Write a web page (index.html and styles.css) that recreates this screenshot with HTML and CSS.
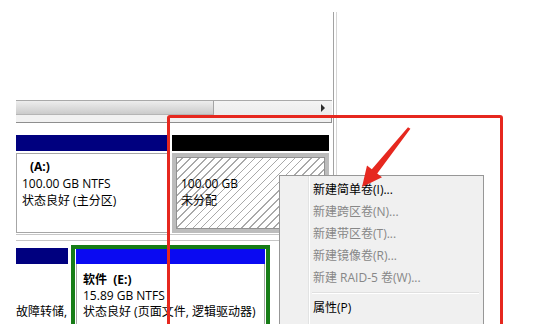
FILE: index.html
```html
<!DOCTYPE html>
<html lang="zh-CN">
<head>
    <meta charset="UTF-8">
    <title>磁盘管理</title>
    <link rel="stylesheet" href="styles.css">
</head>
<body>
    <div class="screen">
        <div class="console">
            <div class="volume-list"></div>
            <div class="hscroll">
                <div class="thumb"></div>
                <div class="track"><span class="arrow-right"></span></div>
            </div>
            <div class="splitter"></div>

            <div class="graph">
                <div class="disk">
                    <div class="part part-a">
                        <div class="bar primary"></div>
                        <div class="body">
                            <p class="label">(A:)</p>
                            <p>100.00 GB NTFS</p>
                            <p>状态良好 (主分区)</p>
                        </div>
                    </div>
                    <div class="part part-free">
                        <div class="bar unallocated"></div>
                        <div class="body hatched">
                            <p>&nbsp;</p>
                            <p>100.00 GB</p>
                            <p>未分配</p>
                        </div>
                    </div>
                </div>

                <div class="disk-sep"></div>

                <div class="disk">
                    <div class="part part-c">
                        <div class="bar primary"></div>
                        <div class="body plain">
                            <p>&nbsp;</p>
                            <p>&nbsp;</p>
                            <p>故障转储,</p>
                        </div>
                    </div>
                    <div class="extended">
                        <div class="part part-e">
                            <div class="bar logical"></div>
                            <div class="body">
                                <p class="label-e">软件&nbsp; (E:)</p>
                                <p>15.89 GB NTFS</p>
                                <p>状态良好 (页面文件, 逻辑驱动器)</p>
                            </div>
                        </div>
                    </div>
                    <div class="part part-next"></div>
                </div>
            </div>
        </div>
        <div class="edge"></div>
    </div>

    <div class="menu">
        <div class="item">新建简单卷(I)...</div>
        <div class="item disabled">新建跨区卷(N)...</div>
        <div class="item disabled">新建带区卷(T)...</div>
        <div class="item disabled">新建镜像卷(R)...</div>
        <div class="item disabled">新建 RAID-5 卷(W)...</div>
        <div class="sep"></div>
        <div class="item">属性(P)</div>
    </div>

    <div class="mark"></div>

    <svg class="pointer" width="535" height="324" viewBox="0 0 535 324">
        <polygon points="408,127.2 371.8,169.2 367,165.5 362,187 382,177.2 377.2,173.6 410.4,128.8" fill="#e6281f"></polygon>
    </svg>
</body>
</html>
```

FILE: styles.css
```css
body {
    margin: 0;
    width: 535px;
    height: 324px;
    overflow: hidden;
    position: relative;
    background-color: #fff;
    color: #000;
    font-family: "Open Sans", "Noto Sans CJK SC", sans-serif;
    font-size: 12px;
}
p {
    margin: 0;
    white-space: nowrap;
}
.screen {
    display: flex;
    height: 324px;
}
.console {
    width: 316px;
    margin-left: 16px;
    display: flex;
    flex-direction: column;
}
.edge {
    width: 2px;
    margin-left: 1px;
    margin-top: 12px;
    border-left: 1px solid #a3a3a3;
    border-right: 1px solid #d6d6d6;
}
.volume-list {
    height: 100px;
}
.hscroll {
    height: 14px;
    border-top: 1px solid #a9a9a9;
    display: flex;
    background: linear-gradient(#f4f4f4, #ececec);
}
.thumb {
    width: 197px;
    background: linear-gradient(#ededed, #dedede 45%, #cbcbcb);
    border-right: 1px solid #a4a4a4;
    border-bottom: 1px solid #b5b5b5;
}
.track {
    flex: 1;
    display: flex;
    justify-content: flex-end;
    align-items: center;
    padding-right: 7px;
}
.arrow-right {
    width: 0;
    height: 0;
    border-left: 4px solid #2b2b2b;
    border-top: 4px solid transparent;
    border-bottom: 4px solid transparent;
}
.splitter {
    height: 7px;
    background-color: #f1f1f1;
    border-bottom: 1px solid #8e8e8e;
    border-right: 1px solid #8e8e8e;
}
.graph {
    flex: 1;
    min-height: 0;
    padding-top: 12px;
    overflow: hidden;
    line-height: 17px;
}
.disk {
    display: flex;
    gap: 4px;
}
.part {
    display: flex;
    flex-direction: column;
}
.bar {
    height: 16px;
}
.primary { background-color: #00007f; }
.unallocated { background-color: #000; }
.logical { background-color: #0a0af2; height: 15px; }
.body {
    box-sizing: border-box;
    height: 80px;
    margin-top: 2px;
    border: 1px solid #a6a6a6;
    padding: 4px 0 0 5px;
    background-color: #fff;
}
.part-a { width: 152px; }
.part-free { width: 157px; }
.label {
    margin-left: 8px;
    font-weight: bold;
}
.hatched {
    border: 4px solid #bcbcbc;
    box-shadow: inset 0 0 0 1px #929292;
    padding-top: 1px;
    background: repeating-linear-gradient(135deg, #fff 0 4.6px, #a9a9a9 4.6px 5.7px);
}
.disk-sep {
    height: 5px;
    margin-top: 1px;
    border-top: 1px solid #c6c6c6;
    border-bottom: 1px solid #c6c6c6;
    margin-bottom: 4px;
}
.disk-sep + .disk {
    gap: 0;
    line-height: 16px;
}
.part-c {
    width: 52px;
    padding-top: 3px;
}
.plain {
    border: none;
    height: 60px;
    margin-top: 0;
    padding: 8px 0 0 0;
}
.extended {
    width: 189px;
    margin-left: 3px;
    border: 4px solid #177c17;
    border-bottom: none;
    padding: 0 1px 0 1px;
}
.part-e .body {
    height: 70px;
    margin-top: 0;
    padding: 8px 0 0 6px;
    border-top: none;
}
.label-e {
    font-weight: bold;
}
.part-next {
    flex: 1;
    margin-left: 9px;
    border-left: 1px solid #a6a6a6;
}
.menu {
    position: absolute;
    left: 279px;
    top: 175px;
    width: 205px;
    height: 152px;
    box-sizing: border-box;
    padding: 3px 2px;
    border: 1px solid #979797;
    background: linear-gradient(90deg, transparent 28px, #e2e3e3 28px 29px, #fff 29px 30px, transparent 30px), #f0f0f0;
}
.item {
    height: 22px;
    line-height: 22px;
    padding-left: 31px;
    white-space: nowrap;
}
.item.disabled {
    color: #878787;
}
.sep {
    height: 0;
    margin: 3px 2px 3px 30px;
    border-top: 1px solid #e0e0e0;
    border-bottom: 1px solid #fff;
}
.mark {
    position: absolute;
    left: 167px;
    top: 115px;
    width: 336px;
    height: 212px;
    box-sizing: border-box;
    border: 3px solid #e6281f;
    border-radius: 3px;
}
.pointer {
    position: absolute;
    left: 0;
    top: 0;
}
```
